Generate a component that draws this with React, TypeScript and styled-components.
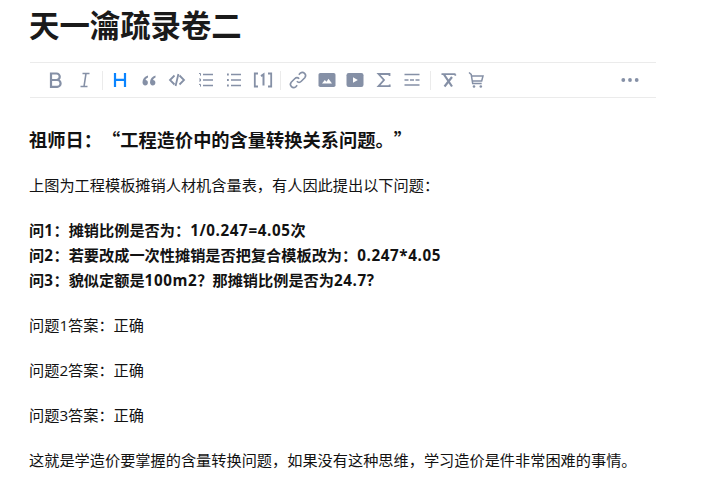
import styled, { createGlobalStyle } from "styled-components";

const GlobalStyle = createGlobalStyle`
  html, body {
    margin: 0;
    padding: 0;
    background: #fff;
    overflow: hidden;
  }
`;

const ICON = "#8590a6";

export default function App() {
  return (
    <>
      <GlobalStyle />
      <Page lang="zh-CN">
        <Title>天一瀹疏录卷二</Title>
        <Toolbar>
          <ToolButton aria-label="bold">
            <Glyph><path d="M7 5.500h5.500a3.200 3.200 0 0 1 0 6.500H7zM7 12h6.200a3.400 3.400 0 0 1 0 6.800H7z" fill="none" stroke={ICON} strokeWidth="2.200" /></Glyph>
          </ToolButton>
          <ToolButton aria-label="italic">
            <Glyph><path d="M9.500 5.500h7M7.500 18.500h7M13 5.500l-2 13" fill="none" stroke={ICON} strokeWidth="1.600" /></Glyph>
          </ToolButton>
          <Separator />
          <ToolButton aria-label="heading">
            <Glyph><path d="M7 5v14M17 5v14M7 11.800h10" fill="none" stroke="#0a84ff" strokeWidth="2.200" /></Glyph>
          </ToolButton>
          <ToolButton aria-label="quote">
            <Glyph>
              <path d="M11 7.500C7.600 8.600 5.500 11 5.500 14.200c0 1.900 1.100 3.200 2.700 3.200s2.700-1.100 2.700-2.700-1-2.600-2.400-2.600c.3-1.200 1.300-2 2.500-2.600zM18.500 7.500c-3.400 1.100-5.500 3.500-5.500 6.700 0 1.900 1.100 3.200 2.700 3.200s2.700-1.100 2.700-2.700-1-2.600-2.400-2.600c.3-1.200 1.300-2 2.500-2.600z" fill={ICON} />
            </Glyph>
          </ToolButton>
          <ToolButton aria-label="code">
            <Glyph><path d="M9.500 7.500L5 12l4.500 4.500M14.500 7.500L19 12l-4.500 4.500M13.400 6l-2.800 12" fill="none" stroke={ICON} strokeWidth="1.800" /></Glyph>
          </ToolButton>
          <ToolButton aria-label="ordered list">
            <Glyph>
              <path d="M9 6.500h10M9 12h10M9 17.500h10" fill="none" stroke={ICON} strokeWidth="1.700" />
              <path d="M5 5.500h1.500v2.200M5 11h1.500v2H5M5 16.400h1.500v2.200" fill="none" stroke={ICON} strokeWidth="1" />
            </Glyph>
          </ToolButton>
          <ToolButton aria-label="bullet list">
            <Glyph>
              <path d="M9 6.500h10M9 12h10M9 17.500h10" fill="none" stroke={ICON} strokeWidth="1.700" />
              <path d="M5 5.600h1.800v1.800H5zM5 11.100h1.800v1.800H5zM5 16.600h1.800v1.800H5z" fill={ICON} />
            </Glyph>
          </ToolButton>
          <ToolButton aria-label="reference">
            <Glyph>
              <path d="M7 5.500H3.800v13H7M17 5.500h3.200v13H17" fill="none" stroke={ICON} strokeWidth="1.800" />
              <path d="M10 8.200L12.500 6.500v11" fill="none" stroke={ICON} strokeWidth="2" />
            </Glyph>
          </ToolButton>
          <Separator />
          <ToolButton aria-label="link">
            <Glyph>
              <path d="M10.800 13.200a3.200 3.200 0 0 0 4.500 0l3.500-3.500a3.200 3.200 0 0 0-4.500-4.500l-1.500 1.500" fill="none" stroke={ICON} strokeWidth="1.600" />
              <path d="M13.200 10.800a3.200 3.200 0 0 0-4.500 0l-3.500 3.500a3.200 3.200 0 0 0 4.500 4.500l1.500-1.500" fill="none" stroke={ICON} strokeWidth="1.600" />
            </Glyph>
          </ToolButton>
          <ToolButton aria-label="image">
            <Glyph>
              <rect x="3.500" y="5" width="17" height="14" rx="1.800" fill={ICON} />
              <path d="M7 15.500l2.800-3.500 1.700 1.800 2-3 3.500 4.700z" fill="#fff" />
            </Glyph>
          </ToolButton>
          <ToolButton aria-label="video">
            <Glyph>
              <rect x="3.500" y="5" width="17" height="14" rx="2.200" fill={ICON} />
              <path d="M10 9.200l4.800 2.800-4.800 2.800z" fill="#fff" />
            </Glyph>
          </ToolButton>
          <ToolButton aria-label="formula">
            <Glyph><path d="M17.500 8V6H6.500l5.500 6-5.500 6.200h11.200v-1.700" fill="none" stroke={ICON} strokeWidth="1.800" /></Glyph>
          </ToolButton>
          <ToolButton aria-label="divider">
            <Glyph>
              <path d="M4.500 6.500h15M4.500 17h15" fill="none" stroke={ICON} strokeWidth="1.700" />
              <path d="M4.500 12h4M10 12h4M15.500 12h4" fill="none" stroke={ICON} strokeWidth="1.500" />
            </Glyph>
          </ToolButton>
          <Separator />
          <ToolButton aria-label="clear format">
            <Glyph>
              <path d="M5.500 6.200h14M19.300 6.200v1.500" fill="none" stroke={ICON} strokeWidth="1.700" />
              <path d="M8 6.500l8 12M16 9l-7.500 9.500" fill="none" stroke={ICON} strokeWidth="2.200" />
            </Glyph>
          </ToolButton>
          <ToolButton aria-label="cart">
            <Glyph>
              <path d="M5 4.500l2.200 1.800 1.500 9.200h9M7.500 8h11.500l-1.300 5H8.300" fill="none" stroke={ICON} strokeWidth="1.500" />
              <circle cx="10" cy="18.500" r="1.300" fill={ICON} />
              <circle cx="16.800" cy="18.500" r="1.300" fill={ICON} />
            </Glyph>
          </ToolButton>
          <MoreButton aria-label="more">
            <Glyph>
              <circle cx="5.300" cy="12" r="1.900" fill={ICON} />
              <circle cx="12" cy="12" r="1.900" fill={ICON} />
              <circle cx="18.700" cy="12" r="1.900" fill={ICON} />
            </Glyph>
          </MoreButton>
        </Toolbar>

        <Article>
          <Heading>祖师日：<QuoteMark $side="open">“</QuoteMark>工程造价中的含量转换关系问题。<QuoteMark $side="close">”</QuoteMark></Heading>
          <Paragraph>上图为工程模板摊销人材机含量表，有人因此提出以下问题：</Paragraph>
          <Paragraph>
            <strong>问<Num>1</Num>：摊销比例是否为：<Num>1/0.247=4.05</Num>次</strong>
            <br />
            <strong>问<Num>2</Num>：若要改成一次性摊销是否把复合模板改为：<Num>0.247*4.05</Num></strong>
            <br />
            <strong>问<Num>3</Num>：貌似定额是<Num>100m2</Num>？那摊销比例是否为<Num>24.7?</Num></strong>
          </Paragraph>
          <Paragraph>问题1答案：正确</Paragraph>
          <Paragraph>问题2答案：正确</Paragraph>
          <Paragraph>问题3答案：正确</Paragraph>
          <Paragraph>这就是学造价要掌握的含量转换问题，如果没有这种思维，学习造价是件非常困难的事情。</Paragraph>
        </Article>
      </Page>
    </>
  );
}

const Page = styled.div`
  width: 626px;
  padding: 7px 0 0 30px;
  font-family: "Open Sans", "Noto Sans CJK SC", sans-serif;
  color: #121212;
`;

const Title = styled.h1`
  margin: 0 0 0 -1px;
  font-size: 30.4px;
  line-height: 38px;
  font-weight: 700;
  color: #1a1a1a;
`;

const Toolbar = styled.div`
  display: flex;
  align-items: center;
  height: 34px;
  margin-top: 17px;
  padding: 0 12px;
  border-top: 1px solid #ebebeb;
  border-bottom: 1px solid #ebebeb;
`;

const ToolButton = styled.button`
  display: flex;
  align-items: center;
  justify-content: center;
  flex: none;
  width: 28.5px;
  height: 24px;
  padding: 0;
  border: 0;
  background: none;
`;

const MoreButton = styled(ToolButton)`
  margin-left: auto;
`;

const Glyph = styled.svg.attrs({ viewBox: "0 0 24 24" })`
  display: block;
  width: 24px;
  height: 24px;
`;

const Separator = styled.span`
  flex: none;
  width: 1px;
  height: 19px;
  margin: 0 3px;
  background: #ebebeb;
`;

const Article = styled.div`
  margin-left: -1px;
  padding-top: 27px;
`;

const Heading = styled.h2`
  margin: 0 0 19px;
  font-size: 18.24px;
  line-height: 28px;
  font-weight: 700;
`;

const QuoteMark = styled.span<{ $side: "open" | "close" }>`
  display: inline-block;
  width: 1em;
  font-family: "Noto Sans CJK SC", sans-serif;
  text-align: ${(p) => (p.$side === "open" ? "right" : "center")};
`;

const Paragraph = styled.p`
  margin: 0 0 20px;
  font-size: 15.2px;
  line-height: 25px;
  white-space: nowrap;

  strong {
    font-weight: 700;
  }
`;

const Num = styled.span`
  letter-spacing: 0.6px;
`;
